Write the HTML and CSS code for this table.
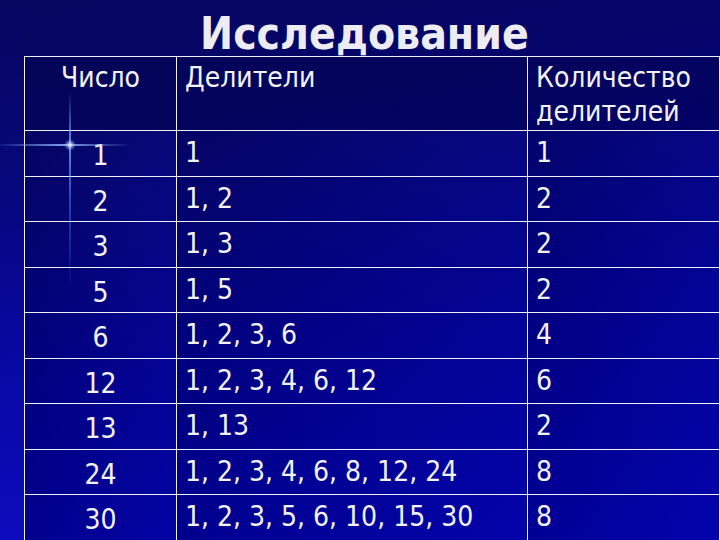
FILE: index.html
```html
<!DOCTYPE html>
<html lang="ru">
<head>
<meta charset="utf-8">
<title>Исследование</title>
<link rel="stylesheet" href="styles.css">
</head>
<body>
<div class="slide">
  <h1 class="title">Исследование</h1>
  <div class="grid">
    <div class="cell head num">Число</div>
    <div class="cell head">Делители</div>
    <div class="cell head">Количество делителей</div>

    <div class="cell num">1</div><div class="cell">1</div><div class="cell">1</div>
    <div class="cell num">2</div><div class="cell">1, 2</div><div class="cell">2</div>
    <div class="cell num">3</div><div class="cell">1, 3</div><div class="cell">2</div>
    <div class="cell num">5</div><div class="cell">1, 5</div><div class="cell">2</div>
    <div class="cell num">6</div><div class="cell">1, 2, 3, 6</div><div class="cell">4</div>
    <div class="cell num">12</div><div class="cell">1, 2, 3, 4, 6, 12</div><div class="cell">6</div>
    <div class="cell num">13</div><div class="cell">1, 13</div><div class="cell">2</div>
    <div class="cell num">24</div><div class="cell">1, 2, 3, 4, 6, 8, 12, 24</div><div class="cell">8</div>
    <div class="cell num">30</div><div class="cell">1, 2, 3, 5, 6, 10, 15, 30</div><div class="cell">8</div>
  </div>
  <div class="strip"></div>
  <div class="flare-v"></div>
  <div class="flare-h"></div>
  <div class="flare-dot"></div>
</div>
</body>
</html>
```
FILE: styles.css
```css
html, body {
  margin: 0;
  padding: 0;
}
body {
  width: 720px;
  height: 540px;
  overflow: hidden;
  background: #000070;
}
.slide {
  position: relative;
  width: 720px;
  height: 540px;
  overflow: hidden;
  background: linear-gradient(170deg, #06065f 0%, #05056c 25%, #00008c 60%, #0000a8 100%);
  font-family: "DejaVu Sans Condensed", "DejaVu Sans", sans-serif;
  font-stretch: condensed;
  color: #f2f2f8;
}
.strip {
  position: absolute;
  left: 0;
  top: 0;
  width: 24px;
  height: 540px;
  background: linear-gradient(180deg, rgba(20,20,200,0) 0%, rgba(20,20,200,0.15) 35%, rgba(20,20,210,0.6) 100%);
}
.title {
  margin: 0;
  height: 56px;
  box-sizing: border-box;
  padding: 12px 0 0 200px;
  font-size: 44px;
  line-height: 44px;
  font-weight: bold;
  color: #ececf2;
  white-space: nowrap;
}
.grid {
  margin-left: 24px;
  display: grid;
  grid-template-columns: 152px 351px 192px;
  grid-template-rows: 74px repeat(9, 45.5px);
  border-top: 1px solid #f0f0f8;
  border-left: 1px solid #f0f0f8;
}
.cell {
  border-right: 1px solid #f0f0f8;
  border-bottom: 1px solid #f0f0f8;
  padding: 5px 8px 0 8px;
  font-size: 28px;
  line-height: 34px;
  white-space: nowrap;
  background: linear-gradient(90deg, rgba(0,0,60,0.15), rgba(30,30,220,0.12));
}
.cell.head {
  padding-top: 4px;
  background: rgba(0,0,40,0.2);
  white-space: normal;
}
.cell.num {
  text-align: center;
  padding-top: 8px;
}
.cell.head.num {
  padding-top: 4px;
}
.flare-v {
  position: absolute;
  left: 69px;
  top: 92px;
  width: 2px;
  height: 200px;
  background: linear-gradient(180deg, rgba(90,140,255,0) 0%, rgba(120,170,255,0.8) 25%, rgba(90,140,255,0.45) 55%, rgba(90,140,255,0) 100%);
}
.flare-h {
  position: absolute;
  left: 0;
  top: 144px;
  width: 130px;
  height: 2px;
  background: linear-gradient(90deg, rgba(90,140,255,0.1) 0%, rgba(140,180,255,0.9) 50%, rgba(90,140,255,0) 100%);
}
.flare-dot {
  position: absolute;
  left: 64px;
  top: 139px;
  width: 12px;
  height: 12px;
  border-radius: 50%;
  background: radial-gradient(circle, rgba(255,255,255,0.95) 0%, rgba(160,190,255,0.5) 40%, rgba(100,140,255,0) 70%);
}
```
